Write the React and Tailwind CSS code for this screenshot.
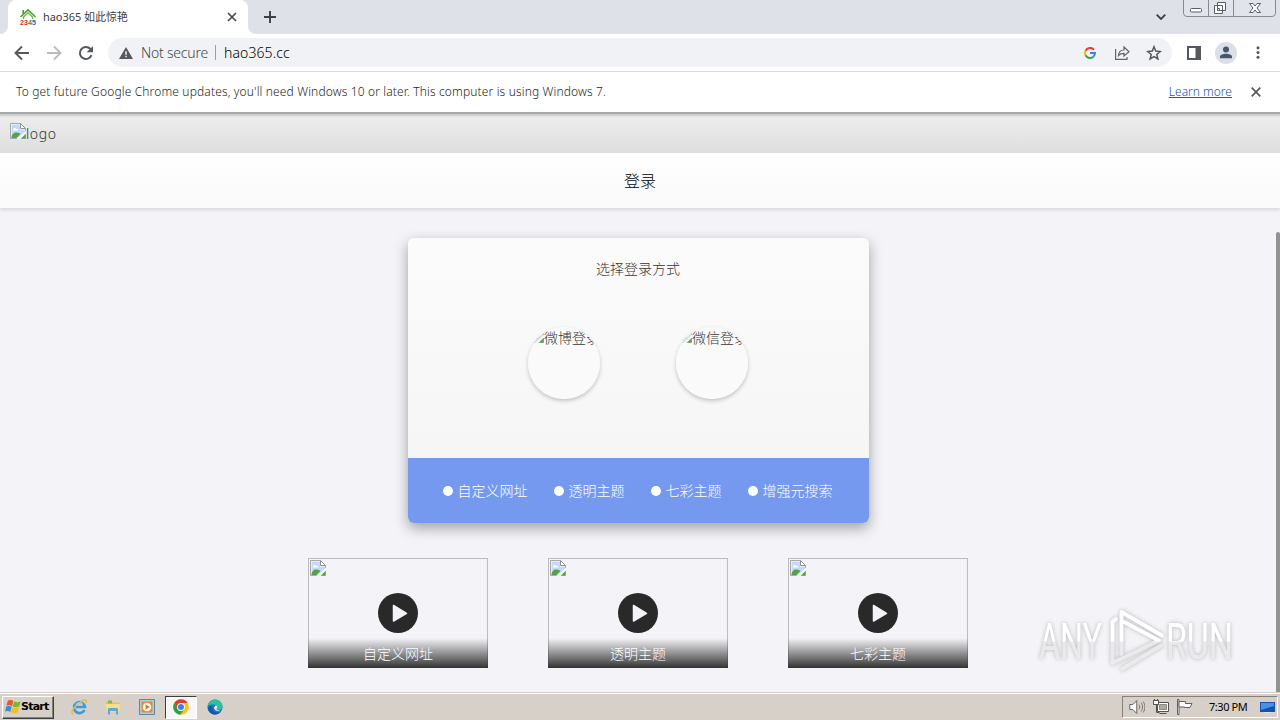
import React from "react";

const features = ["自定义网址", "透明主题", "七彩主题", "增强元搜索"];
const videos = ["自定义网址", "透明主题", "七彩主题"];
const logins = ["微博登录", "微信登录"];

const BrokenImage = () => (
  <svg className="w-4 h-4 shrink-0" viewBox="0 0 16 16">
    <path d="M.5.500h10l5 5v10H.5z" fill="#fff" stroke="#a7a9b0" />
    <path d="M1.500 1.500h8.500v5h5v3L8 15H1.500z" fill="#c3d9f5" />
    <path d="M3 6.500c0-2 3-2 3-.5 2-.5 2.500.5 2 1.500H3z" fill="#fff" />
    <path d="M1.500 15c0-5 5-7 9-4l-4 4z" fill="#55a348" />
    <path d="M6.500 16 16 7.500v3L10.500 16z" fill="#f5f8f4" />
    <path d="m11 15.500 4.500-4.500v4.500z" fill="#55a348" />
    <path d="M10.500.5v5h5z" fill="#fff" stroke="#8f929b" />
  </svg>
);

const ChromeLogo = () => (
  <svg className="w-4 h-4" viewBox="0 0 16 16">
    <circle cx="8" cy="8" r="7.800" fill="#fbc116" />
    <path d="M1.250 4.100A7.800 7.800 0 0 1 14.750 4.100H8L4.600 10z" fill="#e33b2e" />
    <path d="M1.250 4.100 4.600 10 8 11.900l-.5 3.900A7.800 7.800 0 0 1 1.250 4.100z" fill="#2aa148" />
    <path d="M7.300 15.800 11.400 10l-3 1.800z" fill="#2aa148" />
    <circle cx="8" cy="8" r="3.900" fill="#fff" />
    <circle cx="8" cy="8" r="3" fill="#3f7fe8" />
  </svg>
);

const TabStrip = () => (
  <div className="flex h-[34px] bg-[#dee1e8] pl-2 shrink-0">
    <div className="flex items-center w-60 h-full bg-white rounded-t-lg pl-[11px] pr-[11px] relative">
      <svg className="absolute -left-2 bottom-0 w-2 h-2" viewBox="0 0 8 8">
        <path d="M8 0v8H0a8 8 0 0 0 8-8z" fill="#fff" />
      </svg>
      <svg className="absolute -right-2 bottom-0 w-2 h-2" viewBox="0 0 8 8">
        <path d="M0 0v8h8a8 8 0 0 1-8-8z" fill="#fff" />
      </svg>
      <svg className="w-[18px] h-[18px] shrink-0" viewBox="-1 -1 18 18">
        <path d="M.5 8 8 .8 15.500 8M3.200 1v5" fill="none" stroke="#47a12f" strokeWidth="1.600" />
        <path d="M3.500 10V8L8 3.800 12.500 8v2" fill="none" stroke="#65b642" strokeWidth="1.300" />
        <g fontFamily="Liberation Sans" fontSize="7" fontWeight="700">
          <text x="0" y="15.500" fill="#d92b26">2</text>
          <text x="4" y="15.500" fill="#d92b26">3</text>
          <text x="8" y="15.500" fill="#35963a">4</text>
          <text x="12" y="15.500" fill="#2564bc">5</text>
        </g>
      </svg>
      <span className="ml-1.5 text-[11px] font-normal text-[#3c4043] whitespace-nowrap grow tracking-[-0.050px]">hao365 如此惊艳</span>
      <svg className="w-2.5 h-2.5" viewBox="0 0 10 10">
        <path d="m1 1 8 8M9 1 1 9" stroke="#44474b" strokeWidth="1.700" />
      </svg>
    </div>
    <svg className="w-3 h-3 ml-4 mt-[11px]" viewBox="0 0 12 12">
      <path d="M6 0v12M0 6h12" stroke="#3c4043" strokeWidth="1.900" />
    </svg>
    <svg className="w-2.5 h-1.5 ml-auto mr-[17px] mt-3.5" viewBox="0 0 10 6">
      <path d="m.7.7 4.300 4.300L9.300.7" fill="none" stroke="#3c4043" strokeWidth="1.800" />
    </svg>
    <svg className="w-[93px] h-[17px] mr-1" viewBox="0 0 93 17">
      <path d="M.5 0v13a3.500 3.500 0 0 0 3.500 3.500h85a3.500 3.500 0 0 0 3.500-3.500V0M25.500 0v16M50.500 0v16" fill="#e1e4ea" stroke="#858b95" />
      <rect x="7.500" y="8.500" width="11" height="3.500" rx="1" fill="#fff" stroke="#585e68" />
      <path d="M34.500 2.500h8v8h-8zM31.500 5.500h8v8h-8z" fill="#fff" stroke="#585e68" />
      <path d="M34.500 8.500h2v2h-2z" fill="#fff" stroke="#585e68" />
      <path d="M66.500 3.500h3.500l2 2.500 2-2.500h3.500L74 8l3.500 4.500H74L72 10l-2 2.500h-3.500L70 8z" fill="#fff" stroke="#585e68" />
    </svg>
  </div>
);

const Toolbar = () => (
  <div className="flex items-center h-[38px] bg-white border-b border-[#dadce0] shrink-0">
    <svg className="w-4 h-4 ml-3.5" viewBox="0 0 16 16">
      <path d="M15 8H2M8 1.500 1.500 8 8 14.500" fill="none" stroke="#55585c" strokeWidth="1.900" />
    </svg>
    <svg className="w-4 h-4 ml-4" viewBox="0 0 16 16">
      <path d="M1 8h13M8 1.500 14.500 8 8 14.500" fill="none" stroke="#b9bbbe" strokeWidth="1.900" />
    </svg>
    <svg className="w-4 h-4 ml-4" viewBox="0 0 16 16">
      <path d="M13.500 10.200A6 6 0 1 1 12.200 3.800L14 5.600" fill="none" stroke="#55585c" strokeWidth="2" />
      <path d="M15 1v6.300H8.700z" fill="#55585c" />
    </svg>
    <div className="flex items-center h-[29px] w-[1064px] ml-3.5 bg-[#f0f2f5] rounded-full pl-[11px] pr-2.5">
      <svg className="w-[14px] h-3" viewBox="0 0 14 12">
        <path d="M7 0l7 12H0z" fill="#55585c" />
        <path d="M6.300 4.300h1.400v3.500H6.300zM6.300 8.800h1.400v1.400H6.300z" fill="#fff" />
      </svg>
      <span className="ml-2 w-[67px] whitespace-nowrap text-[14px] tracking-[-0.220px] text-[#44484c]">Not secure</span>
      <span className="w-px h-[15px] bg-[#9a9da1] ml-[7px]" />
      <span className="ml-2 text-[14px] tracking-[0.100px] text-black">hao365.cc</span>
      <svg className="w-3 h-3 ml-auto" viewBox="0 0 12 12" fill="none" strokeWidth="2">
        <path d="M10 2.800A5 5 0 0 0 1.600 3.700" stroke="#e64336" />
        <path d="M1.600 3.700a5 5 0 0 0 0 4.600" stroke="#f6b90a" />
        <path d="M1.600 8.300A5 5 0 0 0 9.500 9.600" stroke="#34a351" />
        <path d="M9.500 9.600A5 5 0 0 0 11 6H6" stroke="#4080ed" />
      </svg>
      <svg className="w-4 h-4 ml-[18px]" viewBox="0 0 16 16" fill="none" stroke="#62656a" strokeWidth="1.200">
        <path d="M1.600 4v10.400H13V12" />
        <path d="M4.500 10.500c.2-4 2.500-5.500 5.500-5.500V2l5 4.700-5 4.300V8.400C7.500 8.300 5.800 9 4.500 10.500z" />
      </svg>
      <svg className="w-4 h-4 ml-4" viewBox="0 0 16 16">
        <path d="m8 1.800 1.700 4.300 4.600.4-3.500 3 1.100 4.500L8 11.600 4.100 14l1.100-4.500-3.500-3 4.600-.4z" fill="none" stroke="#55585c" strokeWidth="1.500" />
      </svg>
    </div>
    <svg className="w-3.5 h-3.5 ml-[15px]" viewBox="0 0 14 14">
      <path d="M0 0h14v14H0zM2 2v10h6.500V2z" fill="#55585c" fillRule="evenodd" />
    </svg>
    <svg className="w-[22px] h-[22px] ml-3.5" viewBox="0 0 22 22">
      <circle cx="11" cy="11" r="11" fill="#dbdfe6" />
      <circle cx="11" cy="7.600" r="3" fill="#49546f" />
      <path d="M5 16.200v-1.500c0-2 3-3 6-3s6 1 6 3v1.500z" fill="#49546f" />
    </svg>
    <svg className="w-1 h-[13px] ml-[19px]" viewBox="0 0 4 13" fill="#55585c">
      <circle cx="2" cy="1.700" r="1.500" />
      <circle cx="2" cy="6.500" r="1.500" />
      <circle cx="2" cy="11.300" r="1.500" />
    </svg>
  </div>
);

const InfoBar = () => (
  <div className="flex items-center h-10 bg-white px-4 text-[12px] text-[#1c1f22] shrink-0">
    <span className="whitespace-nowrap tracking-[0.145px]">
      To get future Google Chrome updates, you'll need Windows 10 or later. This computer is using Windows 7.
    </span>
    <a className="ml-auto mr-[19px] text-[#1558b8] underline">Learn more</a>
    <svg className="w-2.5 h-2.5 mr-[3px]" viewBox="0 0 10 10">
      <path d="m.7.7 8.600 8.600M9.300.7.7 9.300" stroke="#55585c" strokeWidth="1.700" />
    </svg>
  </div>
);

const LoginCard = () => (
  <div className="w-[461px] h-[285px] ml-[408px] rounded-md overflow-hidden shadow-[0_5px_14px_rgba(0,0,0,0.35)] text-[14px] font-light">
    <div className="h-[220px] bg-linear-to-b from-[#fbfbfb] to-[#f6f6f6] flex flex-col items-center pt-5 pr-px">
      <h3 className="h-[22px] leading-[22px] text-[#333] font-light">选择登录方式</h3>
      <div className="flex gap-[76px] mt-[47px]">
        {logins.map((name) => (
          <div key={name} className="w-[72px] h-[72px] rounded-full shadow-[0_2px_4px_rgba(0,0,0,0.22)]">
            <div className="w-full h-full rounded-full overflow-hidden bg-[#fafafa] flex items-start text-[#333]">
              <BrokenImage />
              <span className="leading-[21px] whitespace-nowrap h-[18px] overflow-hidden">{name}</span>
            </div>
          </div>
        ))}
      </div>
    </div>
    <div className="h-[65px] bg-[#7499ef] flex items-center justify-center gap-[26px] pr-[2px] text-white font-normal">
      {features.map((name) => (
        <div key={name} className="flex items-center gap-[5px]">
          <span className="w-2.5 h-2.5 rounded-full bg-white" />
          <span className="whitespace-nowrap font-light">{name}</span>
        </div>
      ))}
    </div>
  </div>
);

const Watermark = () => (
  <svg className="absolute left-[1030px] top-[602px] w-[212px] h-[76px] drop-shadow-[0_0_2px_rgba(0,0,0,0.25)]" viewBox="0 0 212 76">
    <defs>
      <linearGradient id="wm" x1="0" y1="0" x2="0" y2="76" gradientUnits="userSpaceOnUse">
        <stop offset=".51" stopColor="#fff" />
        <stop offset=".53" stopColor="#e9e9eb" />
        <stop offset="1" stopColor="#ededef" />
      </linearGradient>
    </defs>
    <g fontFamily="Roboto" fontSize="50" fontWeight="400" fill="url(#wm)">
      <text x="9" y="57" textLength="63" lengthAdjust="spacingAndGlyphs">ANY</text>
      <text x="136" y="57" textLength="67" lengthAdjust="spacingAndGlyphs">RUN</text>
    </g>
    <g fill="none" stroke="url(#wm)" strokeWidth="3.800" strokeLinejoin="round" strokeLinecap="round">
      <path d="M86 17 82.500 20V61L129 38.500 94 20" />
      <path d="M91.500 52V10L132 33.500" />
      <path d="M92 67 131 43.500" />
    </g>
  </svg>
);

const Taskbar = () => (
  <div className="h-7 bg-[#d6d0c8] border-t border-[#d6d0c8] shrink-0">
    <div className="flex items-center h-[27px] border-t border-white">
      <div className="flex items-center w-[52px] h-[23px] ml-0.5 mr-px pl-0.5 border border-t-white border-l-white border-b-[#3f3f3f] border-r-[#3f3f3f] shadow-[inset_-1px_-1px_0_#858078]">
        <svg className="w-4 h-4 shrink-0" viewBox="0 0 16 16">
          <path d="M3 1.500c2-1 4-.5 5.300.4L6.900 7.200C5 6 3.500 6 1.400 6.700z" fill="#ea552b" />
          <path d="M9 2.500c2 1 4 1 6.700.1L14.200 7.600c-2 .9-4.500.8-6.500-.2z" fill="#77b82d" />
          <path d="M1.200 7.500c2-.9 3.900-.7 5.500.3L5.300 13C3.500 11.800 2 12 0 12.600z" fill="#338edb" />
          <path d="M7.500 8.200c2 1 4.200 1 6.600.1l-1.400 5.200c-2.400 1-4.600.8-6.600-.2z" fill="#f5bc26" />
        </svg>
        <span className="font-['DejaVu_Sans','Liberation_Sans',sans-serif] font-bold text-[11px] tracking-[-0.750px] text-black">Start</span>
      </div>
      <svg className="w-[17px] h-4 ml-4" viewBox="0 0 17 16">
        <path d="M13.500 11A5.500 5.500 0 1 1 14 8H5" fill="none" stroke="#3b9bdd" strokeWidth="2.600" />
        <path d="M2 15C-2 14 5 5 11 2c4-2 5-.5 4 2" fill="none" stroke="#e8ba43" strokeWidth="1.400" />
        <path d="M5 6C6 3.500 10 3 12 5.500" fill="none" stroke="#96daf6" strokeWidth="1.200" />
      </svg>
      <svg className="w-4 h-4 ml-[17px]" viewBox="0 0 16 16">
        <path d="M1 2.500h5l1 1h7.500V12H1z" fill="#e3c163" />
        <path d="M3 1.500h4v3H3z" fill="#83b75f" />
        <path d="M.5 5h15l-1 7.500h-13z" fill="#f5dd8b" />
        <path d="M3 15.500V10c0-1 1-1 1-1h8c1 0 1 1 1 1v5.500h-2V12H5v3.500z" fill="#5fa9d8" />
      </svg>
      <svg className="w-4 h-4 ml-[18px]" viewBox="0 0 16 16">
        <path d="M.5.500h15v15H.5z" fill="#a9cde8" stroke="#5289b7" />
        <path d="M2.500 2.500h11v11h-11z" fill="#f18a1b" />
        <circle cx="8" cy="8" r="4.300" fill="#fff" />
        <path d="M6.500 5.300v5.400L11 8z" fill="#e87817" />
      </svg>
      <div className="w-8 h-[23px] ml-2.5 bg-[#f8f7f5] border border-t-[#3f3f3f] border-l-[#3f3f3f] border-b-white border-r-white flex items-center justify-center">
        <ChromeLogo />
      </div>
      <svg className="w-4 h-4 ml-2.5" viewBox="0 0 16 16">
        <circle cx="8" cy="8" r="7.600" fill="#1878c8" />
        <path d="M.6 7C2-1.500 14-2 15.600 7c.3 4-4 4.500-6 3 1.500-2 0-4.500-3-4.500-2.600 0-4.600 0-6 1.500z" fill="#35bba0" />
        <path d="M5.500 8c-1 4 3 6.500 8 5-5 5-12 2-12.500-4 1-2 3-2.500 4.500-1z" fill="#125b9e" />
        <path d="M9.500 10c1.500-2 .5-3.500-1-3.500L7 8.500c0 2.500 3 4.500 7 3.300-1.500 0-3.500-.3-4.500-1.800z" fill="#e5edf0" />
      </svg>
      <div className="flex items-center w-[156px] h-[22px] ml-auto mr-0.5 border border-t-[#858078] border-l-[#858078] border-b-white border-r-white pl-1.5">
        <svg className="w-4 h-4" viewBox="0 0 16 16" fill="none" stroke="#64615d">
          <path d="M.8 5.500h3l4-4v13l-4-4h-3z" fill="#fff" />
          <path d="M10 5.500c1 1.500 1 3.500 0 5M12 3.500c2 2.500 2 6.500 0 9M14 2.500c2.500 3 2.500 8 0 11" strokeWidth=".8" />
        </svg>
        <svg className="w-4 h-4 ml-2" viewBox="0 0 16 16" stroke="#55524e">
          <path d="M4.500 3.500h11v9h-11z" fill="#fff" />
          <path d="M6.500 5.500h7v5h-7z" fill="#aaa9a5" stroke="#8d8a86" />
          <path d="M6.500 14.500h7" />
          <path d="M.5 1.500h5v4h-2v8h3" fill="none" />
          <path d="M.5 1.500h5v4h-5zM1.500 0v2M4.500 0v2" fill="#fff" />
        </svg>
        <svg className="w-4 h-4 ml-2" viewBox="0 0 16 16" fill="#fff" stroke="#64615d">
          <path d="M.5.500h1.500v15H.5z" />
          <path d="M2 2.500h6.500v2h6.500l-2 4H7.500V8H2z" />
        </svg>
        <span className="ml-4 w-[42px] text-[11px] font-normal tracking-[-0.450px] whitespace-nowrap text-black">7:30 PM</span>
        <svg className="w-[15px] h-[13px] ml-[9px]" viewBox="0 0 15 13">
          <path d="M0 1h15v10H0z" fill="#1552a9" />
          <path d="M1 2h13v3L1 9z" fill="#4a91e2" />
          <path d="M4 11h7v1H4z" fill="#d9e7f4" />
        </svg>
      </div>
    </div>
  </div>
);

const App = () => {
  return (
    <div className="relative flex flex-col w-[1280px] h-[720px] overflow-hidden bg-[#f4f4f8] font-['Noto_Sans','Noto_Sans_CJK_SC',sans-serif] font-light">
      <TabStrip />
      <Toolbar />
      <InfoBar />

      <div className="h-[41px] shrink-0 border-t-2 border-[#a8a8a8] bg-linear-to-b from-[#eeeeee] to-[#dedede] shadow-[inset_0_3px_2px_-1px_#ccc] flex pl-2.5 pt-[9px] text-[14px] text-[#333]">
        <BrokenImage />
        <span className="leading-[21px] tracking-[0.600px]">logo</span>
      </div>
      <div className="h-[55px] shrink-0 relative">
        <div className="h-full bg-linear-to-b from-white to-[#fafafa] shadow-[0_2px_4px_rgba(0,0,0,0.12)] [clip-path:inset(0_0_-8px_0)] flex items-center justify-center text-base text-black">
          登录
        </div>
      </div>

      <div className="flex h-[484px] shrink-0">
        <main className="w-[1276px] pt-[30px]">
          <LoginCard />
          <div className="flex gap-[60px] ml-[308px] mt-[35px]">
            {videos.map((name) => (
              <div key={name} className="relative w-[180px] h-[110px] border border-[#bcbcbf] p-px">
                <BrokenImage />
                <svg className="absolute left-[69px] top-[34px] w-10 h-10" viewBox="0 0 40 40">
                  <circle cx="20" cy="20" r="20" fill="#292929" />
                  <path d="M15.500 12.500v15.500L28.500 20.300z" fill="#f4f4f8" stroke="#f4f4f8" strokeWidth="1.500" strokeLinejoin="round" />
                </svg>
                <div className="absolute -left-px -bottom-px w-[180px] h-[30px] bg-linear-to-b from-transparent to-[#333] text-white text-[14px] leading-[32px] text-center">
                  {name}
                </div>
              </div>
            ))}
          </div>
        </main>
        <div className="w-1 mt-6 rounded-t-sm bg-[#929292]" />
      </div>

      <Taskbar />
      <Watermark />
    </div>
  );
};

export default App;
